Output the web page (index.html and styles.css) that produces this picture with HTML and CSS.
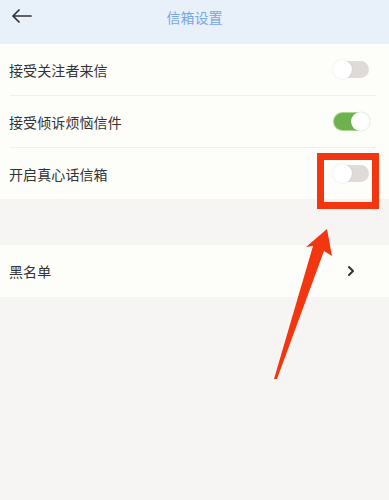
FILE: index.html
```html
<!DOCTYPE html>
<html lang="zh">
<head>
<meta charset="utf-8">
<link rel="stylesheet" href="styles.css">
</head>
<body>
<div class="page">
  <header class="topbar">
    <span class="back">
      <svg width="22" height="14" viewBox="0 0 22 14"><path d="M20 7H2M8 1L2 7L8 13" fill="none" stroke="#333" stroke-width="1.7" stroke-linecap="round" stroke-linejoin="round"/></svg>
    </span>
    <h1 class="title">信箱设置</h1>
  </header>
  <section class="group">
    <div class="row line"><span class="label">接受关注者来信</span><span class="switch"><span class="knob"></span></span></div>
    <div class="row line"><span class="label">接受倾诉烦恼信件</span><span class="switch on"><span class="knob"></span></span></div>
    <div class="row"><span class="label">开启真心话信箱</span><span class="switch"><span class="knob"></span></span></div>
  </section>
  <section class="group second">
    <div class="row tall"><span class="label">黑名单</span>
      <svg class="chev" width="8" height="12" viewBox="0 0 8 12"><path d="M2 2L6 6L2 10" fill="none" stroke="#333" stroke-width="2" stroke-linecap="round" stroke-linejoin="round"/></svg>
    </div>
  </section>
  <div class="redbox"></div>
  <svg class="arrow" width="389" height="500" viewBox="0 0 389 500"><polygon points="327,229 332,256 324,251 277,379 274,379 313,246 306,247" fill="#f2360f"/></svg>
</div>
</body>
</html>
```
FILE: styles.css
```css
html, body { margin: 0; padding: 0; }
body {
  background: #f6f5f3;
  font-family: "Noto Sans CJK SC", "Noto Sans", sans-serif;
  width: 389px;
  height: 500px;
  overflow: hidden;
}
.page { position: relative; width: 389px; height: 500px; }
.topbar {
  height: 44px;
  background: #e8f0f9;
  display: flex;
  align-items: center;
  justify-content: center;
  position: relative;
}
.back { position: absolute; left: 11px; top: 9px; display: flex; }
.title {
  margin: 0;
  font-size: 14px;
  font-weight: normal;
  color: #78a5e6;
  margin-top: -10px;
}
.group { background: #fdfdfa; }
.second { margin-top: 46px; }
.row {
  height: 51px;
  display: flex;
  align-items: center;
  justify-content: space-between;
  padding: 0 20px 0 9px;
  position: relative;
}
.row.tall { height: 52px; padding-right: 34px; }
.row.line::after {
  content: "";
  position: absolute;
  left: 10px;
  right: 13px;
  bottom: -1px;
  height: 1px;
  background: #efeeeb;
}
.row.line { margin-bottom: 1px; }
.label { font-size: 14px; color: #333; letter-spacing: 0.1px; }
.switch {
  width: 35px;
  height: 17px;
  border-radius: 9px;
  background: #dedbd9;
  position: relative;
  display: block;
}
.switch .knob {
  position: absolute;
  left: -1px;
  top: -1px;
  width: 19px;
  height: 19px;
  border-radius: 50%;
  background: #fff;
  box-shadow: 0 0 2px rgba(0,0,0,0.12);
}
.switch.on { background: #6db24e; box-shadow: 0 0 0 1px #a9d98f; }
.switch.on .knob { left: auto; right: -1px; }
.redbox {
  position: absolute;
  left: 317px;
  top: 153px;
  width: 48px;
  height: 42px;
  border: 7px solid #f2360f;
}
.arrow { position: absolute; left: 0; top: 0; }
```
